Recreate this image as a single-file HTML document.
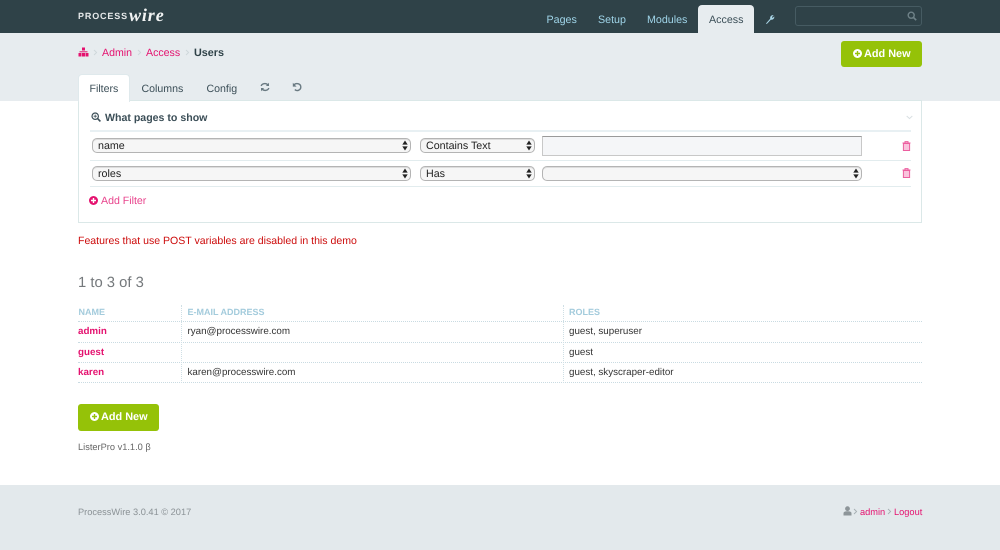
<!DOCTYPE html>
<html><head><meta charset="utf-8">
<style>
html,body{margin:0;padding:0;}
body{width:1000px;height:550px;position:relative;overflow:hidden;background:#fff;font-family:"Liberation Sans",sans-serif;font-size:10.6px;color:#354b60;text-rendering:geometricPrecision;}
.a{position:absolute;white-space:nowrap;}
.pk{color:#e4126f;}
.sel{position:absolute;box-sizing:border-box;height:15px;border:1px solid #b4b4b4;border-radius:5px;background:#f6f6f6;font-size:10.7px;color:#222;line-height:14.5px;padding-left:5px;box-shadow:inset 0 1px 0 #ddd;}
.sel svg{position:absolute;right:2px;top:1px;}
.line{position:absolute;height:1px;background:#e2ecee;}
.dl{position:absolute;left:78px;width:844px;height:0;border-top:1px dotted #c9dbe2;}
.btn{position:absolute;box-sizing:border-box;width:81px;height:26px;background:#95c208;border-radius:3px;color:#fff;font-weight:bold;line-height:26px;}
.btn svg{position:absolute;left:12px;top:8px;}
.btn span{position:absolute;left:23px;top:0;font-size:10.9px;}
.nv{font-size:10.7px;line-height:14px;top:13px;color:#9fd4e8;}
.t{font-size:9.8px;color:#333;line-height:12px;}
.n{font-size:9.8px;font-weight:bold;line-height:12px;color:#e4126f;}
.h{color:#a3cbdc;font-size:9px;font-weight:bold;line-height:12px;}
.f{font-size:9.25px;line-height:12px;top:505.5px;}
</style></head><body>
<div class="a" style="left:0;top:0;width:1000px;height:33px;background:#2f4248;"></div>
<div class="a" style="left:0;top:33px;width:1000px;height:68px;background:#e7ecef;"></div>

<div class="a" style="left:78px;top:10px;color:#e6e9ea;font-size:9px;font-weight:bold;letter-spacing:.85px;line-height:13px;">PROCESS</div>
<div class="a" style="left:129px;top:4px;color:#f2f4f4;font-family:'Liberation Serif',serif;font-style:italic;font-weight:bold;font-size:18px;letter-spacing:.9px;line-height:22px;">wire</div>

<div class="a nv" style="left:546.5px;">Pages</div>
<div class="a nv" style="left:598px;">Setup</div>
<div class="a nv" style="left:647px;">Modules</div>
<div class="a" style="left:698px;top:5px;width:56px;height:28px;background:#e7ecef;border-radius:4px 4px 0 0;"></div>
<div class="a nv" style="left:709px;color:#3b4e57;">Access</div>
<svg class="a" style="left:764px;top:13px" width="12" height="12" viewBox="0 0 12 12"><path d="M2 10.5 L6.2 5.6 C5.8 3.6 7.4 1.8 9.6 2.2 L7.9 4 L8.6 5 L10.2 3.4 C10.8 5.6 8.6 7.2 6.9 6.6 L2.8 11 Z" fill="#a9d5e6"/></svg>
<div class="a" style="left:795px;top:6px;width:127px;height:20px;box-sizing:border-box;border:1px solid #465b62;border-radius:3px;background:#2f4248;"></div>
<svg class="a" style="left:907px;top:11px" width="10" height="10" viewBox="0 0 10 10"><circle cx="4.2" cy="4.2" r="3" fill="none" stroke="#6f8288" stroke-width="1.4"/><path d="M6.5 6.5 L9.2 9.2" stroke="#6f8288" stroke-width="1.6"/></svg>

<svg class="a" style="left:78px;top:47px" width="11" height="10" viewBox="0 0 11 10"><g fill="#e4126f"><rect x="4" y="0.5" width="3" height="3"/><rect x="0.5" y="6" width="3" height="3.5"/><rect x="4" y="6" width="3" height="3.5"/><rect x="7.5" y="6" width="3" height="3.5"/><rect x="1.5" y="4.3" width="8" height="1"/></g></svg>
<svg class="a" style="left:93px;top:49px" width="5" height="7" viewBox="0 0 5 7"><path d="M1 1L3.6 3.5L1 6" fill="none" stroke="#ced7da" stroke-width=".9"/></svg>
<div class="a pk" style="left:102px;top:45.5px;line-height:14px;">Admin</div>
<svg class="a" style="left:137px;top:49px" width="5" height="7" viewBox="0 0 5 7"><path d="M1 1L3.6 3.5L1 6" fill="none" stroke="#ced7da" stroke-width=".9"/></svg>
<div class="a pk" style="left:146px;top:45.5px;line-height:14px;">Access</div>
<svg class="a" style="left:185px;top:49px" width="5" height="7" viewBox="0 0 5 7"><path d="M1 1L3.6 3.5L1 6" fill="none" stroke="#ced7da" stroke-width=".9"/></svg>
<div class="a" style="left:194px;top:45.5px;font-weight:bold;color:#2f4248;line-height:14px;font-size:10.8px;">Users</div>

<div class="btn" style="left:841px;top:41px;"><svg width="9" height="9" viewBox="0 0 9 9"><circle cx="4.5" cy="4.5" r="4.5" fill="#fff"/><path d="M4.5 2v5M2 4.5h5" stroke="#95c208" stroke-width="1.4"/></svg><span>Add New</span></div>

<div class="a" style="left:78px;top:74px;width:52px;height:28px;box-sizing:border-box;background:#fff;border:1px solid #dfe9ec;border-bottom:none;border-radius:4px 4px 0 0;z-index:2;"></div>
<div class="a" style="left:89.5px;top:81.5px;color:#3b4e57;line-height:14px;z-index:3;">Filters</div>
<div class="a" style="left:141.5px;top:81.5px;color:#3b4e57;line-height:14px;">Columns</div>
<div class="a" style="left:206.5px;top:81.5px;color:#3b4e57;line-height:14px;">Config</div>
<svg class="a" style="left:259.5px;top:82px" width="10" height="10" viewBox="0 0 10 10"><path d="M1.2 4C1.8 1.6 5.8 .6 7.9 3" fill="none" stroke="#6a7a82" stroke-width="1.4"/><path d="M9 .8V4H5.9Z" fill="#6a7a82"/><path d="M8.8 6C8.2 8.4 4.2 9.4 2.1 7" fill="none" stroke="#6a7a82" stroke-width="1.4"/><path d="M1 9.2V6H4.1Z" fill="#6a7a82"/></svg>
<svg class="a" style="left:291.5px;top:82px" width="10" height="10" viewBox="0 0 10 10"><path d="M2.2 2.6C4.6 .6 8.8 1.8 8.8 5C8.8 8 5.2 9.6 2.8 7.6" fill="none" stroke="#6a7a82" stroke-width="1.4"/><path d="M.8 .8V4.6H4.6Z" fill="#6a7a82"/></svg>

<div class="a" style="left:78px;top:100px;width:844px;height:123px;box-sizing:border-box;border:1px solid #dbe8e8;background:#fff;"></div>
<svg class="a" style="left:91px;top:112px" width="10" height="10" viewBox="0 0 10 10"><circle cx="4.2" cy="4.2" r="3.2" fill="none" stroke="#3b4e57" stroke-width="1.2"/><path d="M6.6 6.6 L9.4 9.4" stroke="#3b4e57" stroke-width="1.6"/><path d="M2.6 4.2h3.2M4.2 2.6v3.2" stroke="#3b4e57" stroke-width=".8"/></svg>
<div class="a" style="left:105px;top:110.5px;font-weight:bold;color:#3b4e57;line-height:14px;">What pages to show</div>
<svg class="a" style="left:906px;top:115px" width="7" height="5" viewBox="0 0 7 5"><path d="M.7 1 L3.5 3.6 L6.3 1" fill="none" stroke="#d8dfe2" stroke-width="1"/></svg>

<div class="line" style="left:90px;top:130px;width:821px;background:#e8f0f3;height:2px;"></div>
<div class="line" style="left:90px;top:160px;width:821px;"></div>
<div class="line" style="left:90px;top:186px;width:821px;"></div>

<div class="sel" style="left:92px;top:138px;width:319px;">name<svg width="6" height="11" viewBox="0 0 6 11"><path d="M3 .5L5.7 4.6H.3ZM3 10.5L5.7 6.4H.3Z" fill="#222"/></svg></div>
<div class="sel" style="left:420px;top:138px;width:115px;">Contains Text<svg width="6" height="11" viewBox="0 0 6 11"><path d="M3 .5L5.7 4.6H.3ZM3 10.5L5.7 6.4H.3Z" fill="#222"/></svg></div>
<div class="a" style="left:542px;top:136px;width:320px;height:20px;box-sizing:border-box;background:#f5f6f8;border:1px solid #c8c8c8;border-top-color:#9a9a9a;"></div>
<div class="sel" style="left:92px;top:166px;width:319px;">roles<svg width="6" height="11" viewBox="0 0 6 11"><path d="M3 .5L5.7 4.6H.3ZM3 10.5L5.7 6.4H.3Z" fill="#222"/></svg></div>
<div class="sel" style="left:420px;top:166px;width:115px;">Has<svg width="6" height="11" viewBox="0 0 6 11"><path d="M3 .5L5.7 4.6H.3ZM3 10.5L5.7 6.4H.3Z" fill="#222"/></svg></div>
<div class="sel" style="left:542px;top:166px;width:320px;"><svg width="6" height="11" viewBox="0 0 6 11"><path d="M3 .5L5.7 4.6H.3ZM3 10.5L5.7 6.4H.3Z" fill="#222"/></svg></div>

<svg class="a" style="left:902px;top:140.5px" width="9" height="10" viewBox="0 0 9 10"><path d="M3 1.5V.6H6V1.5M.5 2H8.5" fill="none" stroke="#ec5e9f" stroke-width="1"/><rect x="1.4" y="2.5" width="6.2" height="7" fill="#f9c3dc" stroke="#ec5e9f" stroke-width="1"/></svg>
<svg class="a" style="left:902px;top:168px" width="9" height="10" viewBox="0 0 9 10"><path d="M3 1.5V.6H6V1.5M.5 2H8.5" fill="none" stroke="#ec5e9f" stroke-width="1"/><rect x="1.4" y="2.5" width="6.2" height="7" fill="#f9c3dc" stroke="#ec5e9f" stroke-width="1"/></svg>

<svg class="a" style="left:89px;top:196px" width="9" height="9" viewBox="0 0 9 9"><circle cx="4.5" cy="4.5" r="4.5" fill="#e4126f"/><path d="M4.5 2v5M2 4.5h5" stroke="#fff" stroke-width="1.4"/></svg>
<div class="a" style="left:101px;top:193.5px;color:#e8438c;line-height:14px;">Add Filter</div>

<div class="a" style="left:78px;top:233.5px;color:#cc0a0a;line-height:14px;font-size:10.55px;">Features that use POST variables are disabled in this demo</div>
<div class="a" style="left:78px;top:274px;color:#75797c;font-size:14.8px;line-height:18px;">1 to 3 of 3</div>

<div class="a h" style="left:78.5px;top:306px;">NAME</div>
<div class="a h" style="left:187.5px;top:306px;">E-MAIL ADDRESS</div>
<div class="a h" style="left:569px;top:306px;">ROLES</div>

<div class="dl" style="top:321px"></div>
<div class="dl" style="top:342px"></div>
<div class="dl" style="top:362px"></div>
<div class="dl" style="top:382px"></div>
<div class="a" style="left:181px;top:305px;height:78px;width:0;border-left:1px dotted #cfdfe5;"></div>
<div class="a" style="left:563px;top:305px;height:78px;width:0;border-left:1px dotted #cfdfe5;"></div>

<div class="a n" style="left:78px;top:326px;">admin</div>
<div class="a t" style="left:187.5px;top:326px;">ryan@processwire.com</div>
<div class="a t" style="left:569px;top:326px;">guest, superuser</div>
<div class="a n" style="left:78px;top:347px;">guest</div>
<div class="a t" style="left:569px;top:347px;">guest</div>
<div class="a n" style="left:78px;top:367px;">karen</div>
<div class="a t" style="left:187.5px;top:367px;">karen@processwire.com</div>
<div class="a t" style="left:569px;top:367px;">guest, skyscraper-editor</div>

<div class="btn" style="left:78px;top:404px;height:27px;"><svg width="9" height="9" viewBox="0 0 9 9"><circle cx="4.5" cy="4.5" r="4.5" fill="#fff"/><path d="M4.5 2v5M2 4.5h5" stroke="#95c208" stroke-width="1.4"/></svg><span>Add New</span></div>
<div class="a" style="left:78px;top:440.5px;font-size:9.25px;color:#666;line-height:12px;">ListerPro v1.1.0 β</div>

<div class="a" style="left:0;top:485px;width:1000px;height:65px;background:#e3e9ec;"></div>
<div class="a f" style="left:78px;color:#8b9296;">ProcessWire 3.0.41 © 2017</div>
<svg class="a" style="left:843px;top:506px" width="9" height="10" viewBox="0 0 9 10"><circle cx="4.5" cy="2.7" r="2.4" fill="#8d9599"/><path d="M.5 9.5V7.2C.5 5.8 2 5.2 4.5 5.2S8.5 5.8 8.5 7.2V9.5Z" fill="#8d9599"/></svg>
<svg class="a" style="left:853px;top:507.5px" width="5" height="7" viewBox="0 0 5 7"><path d="M1 1L3.6 3.5L1 6" fill="none" stroke="#a5aeb2" stroke-width=".9"/></svg>
<div class="a f pk" style="left:860px;">admin</div>
<svg class="a" style="left:887px;top:507.5px" width="5" height="7" viewBox="0 0 5 7"><path d="M1 1L3.6 3.5L1 6" fill="none" stroke="#a5aeb2" stroke-width=".9"/></svg>
<div class="a f pk" style="left:894px;">Logout</div>
</body></html>
